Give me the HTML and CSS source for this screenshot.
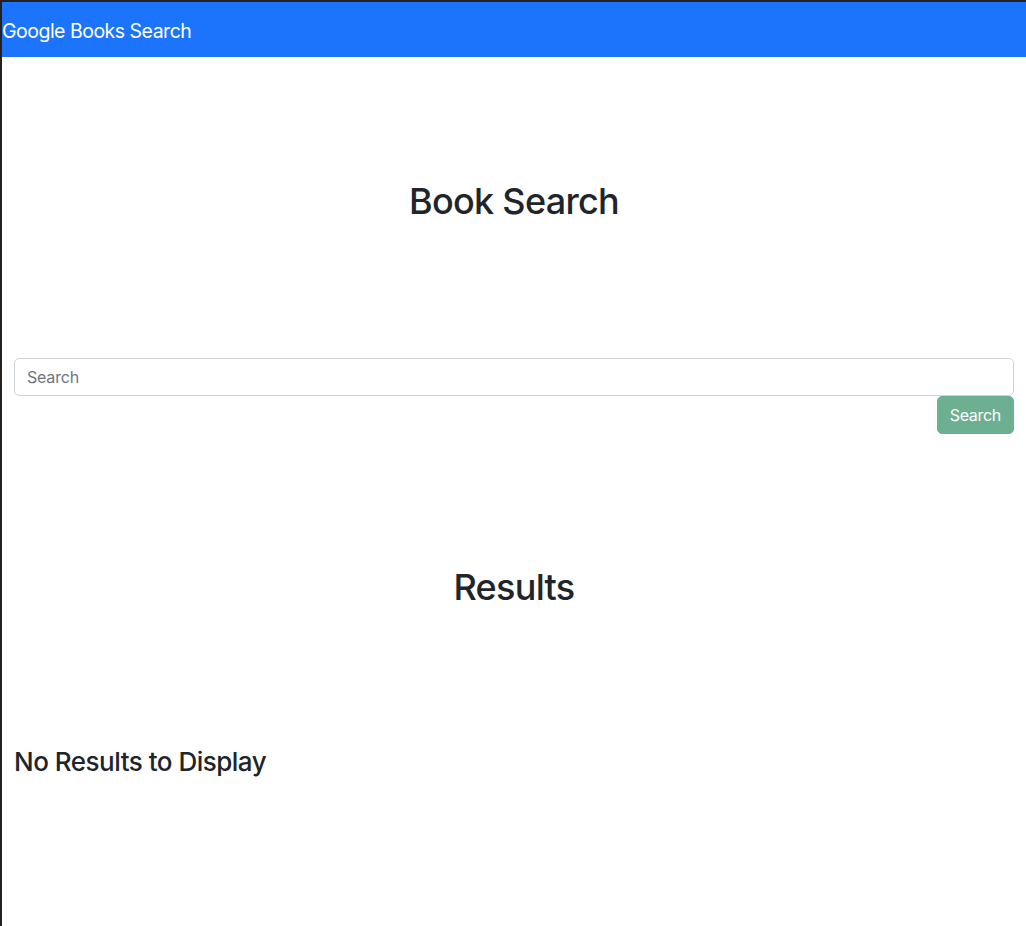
FILE: index.html
```html
<!DOCTYPE html>
<html lang="en">
<head>
<meta charset="utf-8">
<title>Google Books Search</title>
<link rel="stylesheet" href="styles.css">
</head>
<body>
<div class="frame">
  <nav class="navbar">
    <span class="brand">Google Books Search</span>
  </nav>
  <main class="container">
    <section class="hero">
      <h1 class="title">Book Search</h1>
    </section>
    <form class="search-form">
      <input class="form-control" type="text" placeholder="Search">
      <div class="actions">
        <button class="btn" type="button" disabled>Search</button>
      </div>
    </form>
    <section class="results">
      <h1 class="title">Results</h1>
    </section>
    <h3 class="empty">No Results to Display</h3>
  </main>
</div>
</body>
</html>
```

FILE: styles.css
```css
html, body {
  margin: 0;
  padding: 0;
  background: #222;
}
body {
  font-family: Inter, "Noto Sans", "Liberation Sans", sans-serif;
  color: #212529;
  font-size: 16px;
  line-height: 1.5;
}
.frame {
  margin: 2px 0 0 2px;
  min-height: 924px;
  background: #fff;
}
.navbar {
  height: 55px;
  background: #1c74fd;
  display: flex;
  align-items: center;
}
.brand {
  color: #fff;
  font-size: 19.5px;
  letter-spacing: -0.5px;
  line-height: 1;
  padding-top: 4px;
}
.container {
  padding: 0 12px;
}
.title {
  margin: 0;
  font-size: 36px;
  font-weight: 500;
  letter-spacing: -0.7px;
  line-height: 1.25;
  text-align: center;
}
.hero {
  padding-top: 122px;
}
.search-form {
  margin-top: 134px;
}
.form-control {
  display: block;
  box-sizing: border-box;
  width: 100%;
  height: 38px;
  padding: 6px 12px;
  font-family: inherit;
  font-size: 16px;
  letter-spacing: -0.2px;
  color: #212529;
  border: 1px solid #ced4da;
  border-radius: 5px;
  background: #fff;
}
.form-control::placeholder {
  color: #6c757d;
}
.actions {
  display: flex;
  justify-content: flex-end;
}
.btn {
  height: 38px;
  padding: 6px 12px;
  font-family: inherit;
  font-size: 16px;
  letter-spacing: -0.3px;
  color: #fff;
  background: #6daf91;
  border: 1px solid #6daf91;
  border-radius: 5px;
}
.results {
  margin-top: 131px;
}
.empty {
  margin: 136px 0 0;
  font-size: 26px;
  font-weight: 500;
  letter-spacing: -0.5px;
  line-height: 1.2;
}
```
